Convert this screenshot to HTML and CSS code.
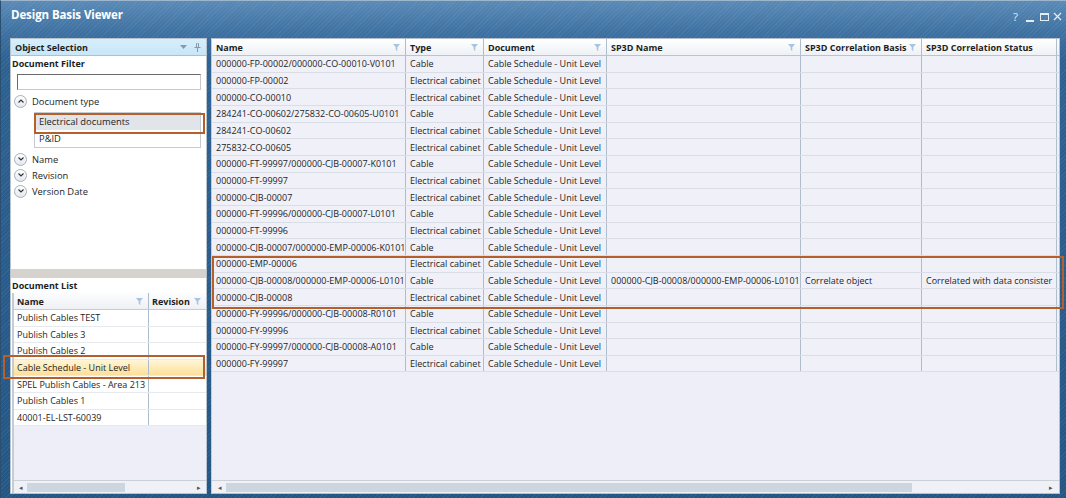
FILE: index.html
```html
<!DOCTYPE html>
<html>
<head>
<meta charset="utf-8">
<link rel="stylesheet" href="styles.css">
</head>
<body>
<div class="window">
  <div class="titlebar">
    <span class="title">Design Basis Viewer</span>
    <div class="controls">
      <span class="ctl q">?</span>
      <span class="ctl min"></span>
      <span class="ctl max"></span>
      <svg class="ctl-x" width="9" height="9" viewBox="0 0 9 9"><path d="M1 1L8 8M8 1L1 8" stroke="#e4ecf4" stroke-width="1.3"/></svg>
    </div>
  </div>
  <div class="body">
    <div class="left">
      <div class="pane-head">
        <span>Object Selection</span>
        <span class="pane-icons">
          <svg width="7" height="5" viewBox="0 0 7 5"><path d="M0 0H7L3.5 4Z" fill="#8a98a8"/></svg>
          <svg width="7" height="9" viewBox="0 0 7 9"><path d="M2 0H5M2.5 0.5V4M4.5 0.5V4M0.5 4.5H6.5M3.5 4.5V9" stroke="#8a98a8" stroke-width="1" fill="none"/></svg>
        </span>
      </div>
      <div class="filter">
        <div class="section-label">Document Filter</div>
        <div class="search"></div>
        <div class="tree-item"><span class="chev"><svg width="6" height="4" viewBox="0 0 6 4"><path d="M0.5 3.5L3 1L5.5 3.5" stroke="#333" stroke-width="1.2" fill="none"/></svg></span>Document type</div>
        <div class="typelist">
          <div class="type sel">Electrical documents</div>
          <div class="type">P&amp;ID</div>
        </div>
        <div class="tree-item tight"><span class="chev"><svg width="6" height="4" viewBox="0 0 6 4"><path d="M0.5 0.5L3 3L5.5 0.5" stroke="#333" stroke-width="1.2" fill="none"/></svg></span>Name</div>
        <div class="tree-item tight"><span class="chev"><svg width="6" height="4" viewBox="0 0 6 4"><path d="M0.5 0.5L3 3L5.5 0.5" stroke="#333" stroke-width="1.2" fill="none"/></svg></span>Revision</div>
        <div class="tree-item tight"><span class="chev"><svg width="6" height="4" viewBox="0 0 6 4"><path d="M0.5 0.5L3 3L5.5 0.5" stroke="#333" stroke-width="1.2" fill="none"/></svg></span>Version Date</div>
      </div>
      <div class="splitter"></div>
      <div class="doclist">
        <div class="section-label dl">Document List</div>
        <div class="lgrid">
          <div class="lhead">
            <div class="lc c-name">Name<svg class="funnel" width="7" height="7" viewBox="0 0 7 7"><path d="M0 0H7L4.3 3.2V7L2.7 6V3.2Z" fill="#a9c4de"/></svg></div>
            <div class="lc c-rev">Revision<svg class="funnel" width="7" height="7" viewBox="0 0 7 7"><path d="M0 0H7L4.3 3.2V7L2.7 6V3.2Z" fill="#a9c4de"/></svg></div>
          </div>
          <div class="lrow"><div class="lc c-name">Publish Cables TEST</div><div class="lc c-rev"></div></div>
          <div class="lrow"><div class="lc c-name">Publish Cables 3</div><div class="lc c-rev"></div></div>
          <div class="lrow"><div class="lc c-name">Publish Cables 2</div><div class="lc c-rev"></div></div>
          <div class="lrow sel"><div class="lc c-name">Cable Schedule - Unit Level</div><div class="lc c-rev"></div></div>
          <div class="lrow"><div class="lc c-name">SPEL Publish Cables - Area 213</div><div class="lc c-rev"></div></div>
          <div class="lrow"><div class="lc c-name">Publish Cables 1</div><div class="lc c-rev"></div></div>
          <div class="lrow"><div class="lc c-name">40001-EL-LST-60039</div><div class="lc c-rev"></div></div>
          <div class="lfill"></div>
          <div class="hscroll">
            <span class="arr">&#9666;</span>
            <div class="track"><div class="thumb lthumb"></div></div>
            <span class="arr">&#9656;</span>
          </div>
        </div>
      </div>
    </div>
    <div class="main">
      <div class="ghead">
        <div class="gc w1">Name<svg class="funnel" width="7" height="7" viewBox="0 0 7 7"><path d="M0 0H7L4.3 3.2V7L2.7 6V3.2Z" fill="#a9c4de"/></svg></div>
        <div class="gc w2">Type<svg class="funnel" width="7" height="7" viewBox="0 0 7 7"><path d="M0 0H7L4.3 3.2V7L2.7 6V3.2Z" fill="#a9c4de"/></svg></div>
        <div class="gc w3">Document<svg class="funnel" width="7" height="7" viewBox="0 0 7 7"><path d="M0 0H7L4.3 3.2V7L2.7 6V3.2Z" fill="#a9c4de"/></svg></div>
        <div class="gc w4">SP3D Name<svg class="funnel" width="7" height="7" viewBox="0 0 7 7"><path d="M0 0H7L4.3 3.2V7L2.7 6V3.2Z" fill="#a9c4de"/></svg></div>
        <div class="gc w5">SP3D Correlation Basis<svg class="funnel" width="7" height="7" viewBox="0 0 7 7"><path d="M0 0H7L4.3 3.2V7L2.7 6V3.2Z" fill="#a9c4de"/></svg></div>
        <div class="gc w6">SP3D Correlation Status</div>
      </div>
      <div class="grows">
        <div class="grow"><div class="gc w1">000000-FP-00002/000000-CO-00010-V0101</div><div class="gc w2">Cable</div><div class="gc w3">Cable Schedule - Unit Level</div><div class="gc w4"></div><div class="gc w5"></div><div class="gc w6"></div></div>
        <div class="grow"><div class="gc w1">000000-FP-00002</div><div class="gc w2">Electrical cabinet</div><div class="gc w3">Cable Schedule - Unit Level</div><div class="gc w4"></div><div class="gc w5"></div><div class="gc w6"></div></div>
        <div class="grow"><div class="gc w1">000000-CO-00010</div><div class="gc w2">Electrical cabinet</div><div class="gc w3">Cable Schedule - Unit Level</div><div class="gc w4"></div><div class="gc w5"></div><div class="gc w6"></div></div>
        <div class="grow"><div class="gc w1">284241-CO-00602/275832-CO-00605-U0101</div><div class="gc w2">Cable</div><div class="gc w3">Cable Schedule - Unit Level</div><div class="gc w4"></div><div class="gc w5"></div><div class="gc w6"></div></div>
        <div class="grow"><div class="gc w1">284241-CO-00602</div><div class="gc w2">Electrical cabinet</div><div class="gc w3">Cable Schedule - Unit Level</div><div class="gc w4"></div><div class="gc w5"></div><div class="gc w6"></div></div>
        <div class="grow"><div class="gc w1">275832-CO-00605</div><div class="gc w2">Electrical cabinet</div><div class="gc w3">Cable Schedule - Unit Level</div><div class="gc w4"></div><div class="gc w5"></div><div class="gc w6"></div></div>
        <div class="grow"><div class="gc w1">000000-FT-99997/000000-CJB-00007-K0101</div><div class="gc w2">Cable</div><div class="gc w3">Cable Schedule - Unit Level</div><div class="gc w4"></div><div class="gc w5"></div><div class="gc w6"></div></div>
        <div class="grow"><div class="gc w1">000000-FT-99997</div><div class="gc w2">Electrical cabinet</div><div class="gc w3">Cable Schedule - Unit Level</div><div class="gc w4"></div><div class="gc w5"></div><div class="gc w6"></div></div>
        <div class="grow"><div class="gc w1">000000-CJB-00007</div><div class="gc w2">Electrical cabinet</div><div class="gc w3">Cable Schedule - Unit Level</div><div class="gc w4"></div><div class="gc w5"></div><div class="gc w6"></div></div>
        <div class="grow"><div class="gc w1">000000-FT-99996/000000-CJB-00007-L0101</div><div class="gc w2">Cable</div><div class="gc w3">Cable Schedule - Unit Level</div><div class="gc w4"></div><div class="gc w5"></div><div class="gc w6"></div></div>
        <div class="grow"><div class="gc w1">000000-FT-99996</div><div class="gc w2">Electrical cabinet</div><div class="gc w3">Cable Schedule - Unit Level</div><div class="gc w4"></div><div class="gc w5"></div><div class="gc w6"></div></div>
        <div class="grow"><div class="gc w1">000000-CJB-00007/000000-EMP-00006-K0101</div><div class="gc w2">Cable</div><div class="gc w3">Cable Schedule - Unit Level</div><div class="gc w4"></div><div class="gc w5"></div><div class="gc w6"></div></div>
        <div class="grow"><div class="gc w1">000000-EMP-00006</div><div class="gc w2">Electrical cabinet</div><div class="gc w3">Cable Schedule - Unit Level</div><div class="gc w4"></div><div class="gc w5"></div><div class="gc w6"></div></div>
        <div class="grow"><div class="gc w1">000000-CJB-00008/000000-EMP-00006-L0101</div><div class="gc w2">Cable</div><div class="gc w3">Cable Schedule - Unit Level</div><div class="gc w4">000000-CJB-00008/000000-EMP-00006-L0101</div><div class="gc w5">Correlate object</div><div class="gc w6 clip">Correlated with data consister</div></div>
        <div class="grow"><div class="gc w1">000000-CJB-00008</div><div class="gc w2">Electrical cabinet</div><div class="gc w3">Cable Schedule - Unit Level</div><div class="gc w4"></div><div class="gc w5"></div><div class="gc w6"></div></div>
        <div class="grow"><div class="gc w1">000000-FY-99996/000000-CJB-00008-R0101</div><div class="gc w2">Cable</div><div class="gc w3">Cable Schedule - Unit Level</div><div class="gc w4"></div><div class="gc w5"></div><div class="gc w6"></div></div>
        <div class="grow"><div class="gc w1">000000-FY-99996</div><div class="gc w2">Electrical cabinet</div><div class="gc w3">Cable Schedule - Unit Level</div><div class="gc w4"></div><div class="gc w5"></div><div class="gc w6"></div></div>
        <div class="grow"><div class="gc w1">000000-FY-99997/000000-CJB-00008-A0101</div><div class="gc w2">Cable</div><div class="gc w3">Cable Schedule - Unit Level</div><div class="gc w4"></div><div class="gc w5"></div><div class="gc w6"></div></div>
        <div class="grow"><div class="gc w1">000000-FY-99997</div><div class="gc w2">Electrical cabinet</div><div class="gc w3">Cable Schedule - Unit Level</div><div class="gc w4"></div><div class="gc w5"></div><div class="gc w6"></div></div>
      </div>
      <div class="gfill"></div>
      <div class="hscroll main-scroll">
        <span class="arr">&#9666;</span>
        <div class="track"><div class="thumb mthumb"></div></div>
        <span class="arr">&#9656;</span>
      </div>
    </div>
  </div>
  <div class="anno anno-type"></div>
  <div class="anno anno-doc"></div>
  <div class="anno anno-rows"></div>
</div>
</body>
</html>
```

FILE: styles.css
```css
* { box-sizing: border-box; }
html, body { margin: 0; padding: 0; }
body {
  font-family: "Open Sans", "Noto Sans", "Liberation Sans", sans-serif;
  font-size: 9px;
  color: #1e1e1e;
  background: #ffffff;
}
.window {
  position: relative;
  width: 1066px;
  height: 498px;
  display: flex;
  flex-direction: column;
  background:
    repeating-linear-gradient(135deg, rgba(255,255,255,0.05) 0 1px, rgba(255,255,255,0) 1px 3px),
    linear-gradient(180deg, #5a8ab7 0px, #3f72a2 30px, #2d6192 60px, #245684 100%);
  border-top: 1px solid #9db6cc;
  border-left: 1px solid #2a4f70;
  overflow: hidden;
}
.titlebar {
  height: 36px;
  display: flex;
  align-items: flex-start;
  justify-content: space-between;
  padding: 6px 4px 0 10px;
  flex-shrink: 0;
}
.title {
  font-weight: 700;
  font-size: 11.5px;
  color: #ffffff;
  letter-spacing: -0.1px;
}
.controls {
  display: flex;
  align-items: center;
  padding-top: 2px;
  color: #dfe8f2;
  font-size: 11.5px;
}
.ctl { display: inline-block; }
.ctl.min { width: 8px; height: 2px; background: #e4ecf4; margin-top: 8px; margin-left: 8px; }
.ctl.max { width: 9px; height: 8px; border: 1px solid #e4ecf4; border-top-width: 2px; margin-left: 6px; }
.ctl-x { margin-left: 4px; }
.body {
  flex: 1;
  display: flex;
  padding: 1px 6px 4px 9px;
  gap: 4px;
  min-height: 0;
}

/* ---------- left pane ---------- */
.left {
  width: 197px;
  display: flex;
  flex-direction: column;
  background: #ffffff;
  border: 1px solid #b7c3cf;
}
.pane-head {
  height: 17px;
  background: linear-gradient(#d7eefb, #c7e6f8);
  border-bottom: 1px solid #9fc4de;
  display: flex;
  align-items: center;
  justify-content: space-between;
  padding: 0 5px 0 4px;
  font-weight: 700;
  flex-shrink: 0;
}
.pane-icons { display: flex; align-items: center; gap: 7px; }
.filter {
  height: 213px;
  flex-shrink: 0;
  padding: 1px 3px 0 1px;
}
.section-label {
  font-weight: 700;
  height: 14px;
  line-height: 14px;
}
.search {
  margin: 3px 2px 0 5px;
  height: 16px;
  border: 1px solid #6b6b6b;
  border-right-color: #c8c8c8;
  border-bottom-color: #c8c8c8;
  background: #fff;
}
.tree-item {
  display: flex;
  align-items: center;
  height: 16px;
  margin-top: 3px;
  gap: 5px;
  font-size: 9.4px;
}
.tree-item.tight { margin-top: 0; }
.chev {
  width: 13px;
  height: 13px;
  border-radius: 50%;
  border: 1px solid #a7b0bb;
  background: linear-gradient(#ffffff, #e3e8ee);
  display: flex;
  align-items: center;
  justify-content: center;
  margin-left: 2px;
}
.typelist {
  margin: 3px 2px 3px 22px;
  border: 1px solid #c6cbd2;
}
.type {
  height: 17px;
  line-height: 17px;
  padding-left: 4px;
  border-bottom: 1px solid #e2e5ea;
  font-size: 9.4px;
}
.type:last-child { border-bottom: none; }
.type.sel { background: #e1e4e9; }
.splitter {
  height: 9px;
  background: #d6d3ce;
  flex-shrink: 0;
}
.doclist {
  flex: 1;
  display: flex;
  flex-direction: column;
  padding-top: 1px;
  min-height: 0;
}
.section-label.dl { padding-left: 1px; height: 14px; }
.lgrid {
  flex: 1;
  display: flex;
  flex-direction: column;
  margin-left: 1px;
  border-left: 2px solid #c5ccd4;
  background: #eeeef8;
  min-height: 0;
}
.lhead {
  display: flex;
  height: 17px;
  background: linear-gradient(#fdfdfe, #eef0f4);
  border-bottom: 1px solid #c3cbd4;
  font-weight: 700;
  flex-shrink: 0;
}
.lrow {
  display: flex;
  height: 16.6px;
  background: #ffffff;
  border-bottom: 1px solid #e6e9ee;
  flex-shrink: 0;
}
.lrow.sel { background: linear-gradient(#fff6d8, #fddf99); }
.lc {
  display: flex;
  align-items: center;
  justify-content: space-between;
  padding: 0 5px 0 3px;
  white-space: nowrap;
  overflow: hidden;
}
.c-name { width: 135px; border-right: 1px solid #aebdcb; }
.c-rev { flex: 1; }
.lfill { flex: 1; }
.funnel { flex-shrink: 0; }

.hscroll {
  height: 13px;
  display: flex;
  align-items: center;
  background: #f0f0f7;
  border-top: 1px solid #c9d0d8;
  flex-shrink: 0;
  padding: 0 3px;
  gap: 2px;
}
.arr { font-size: 7px; color: #555; width: 8px; text-align: center; line-height: 1; }
.track { flex: 1; height: 9px; position: relative; }
.thumb { height: 9px; background: #cdd6de; }
.lthumb { width: 98px; }
.mthumb { width: 686px; }

/* ---------- main grid ---------- */
.main {
  width: 849px;
  display: flex;
  flex-direction: column;
  background: #eeeef8;
  border: 1px solid #b5c0cc;
  border-left: 1px solid #c2ccd6;
}
.ghead {
  display: flex;
  height: 17px;
  background: linear-gradient(#ffffff, #eef1f5);
  border-bottom: 1px solid #b9c4cf;
  font-weight: 700;
  flex-shrink: 0;
}
.grows { flex-shrink: 0; }
.grow {
  display: flex;
  height: 16.67px;
  background: #eff0f8;
  border-bottom: 1px solid #d9dde5;
}
.gc {
  display: flex;
  align-items: center;
  justify-content: space-between;
  padding: 0 5px 0 4px;
  white-space: nowrap;
  overflow: hidden;
  border-right: 1px solid #b0bdca;
  flex-shrink: 0;
}
.w1 { width: 194px; }
.w2 { width: 78px; }
.w3 { width: 123px; }
.w4 { width: 194px; }
.w5 { width: 121px; }
.w6 { width: 135px; justify-content: flex-start; padding-right: 0; }
.gfill { flex: 1; }
.main-scroll { padding: 0 4px; }

/* ---------- annotations ---------- */
.anno {
  position: absolute;
  border: 2px solid #b5602a;
  pointer-events: none;
}
.anno-type { left: 33px; top: 112px; width: 171px; height: 21px; }
.anno-doc { left: 2px; top: 354px; width: 202px; height: 24px; }
.anno-rows { left: 211px; top: 255px; width: 852px; height: 53px; }
```
